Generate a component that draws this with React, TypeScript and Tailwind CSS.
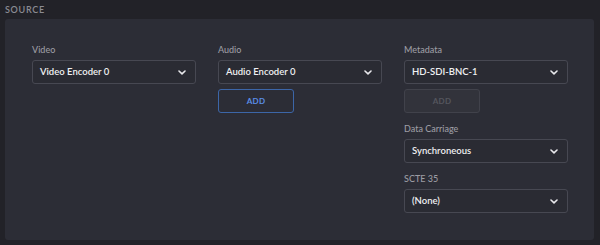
import React from "react";

const Chevron = () => (
  <svg width="8" height="5" viewBox="0 0 8 5" fill="none" className="shrink-0">
    <path d="M1 1l3 2.8L7 1" stroke="#e8e8ec" strokeWidth="1.6" strokeLinecap="round" strokeLinejoin="round" />
  </svg>
);

const Select = ({ value }: { value: string }) => (
  <div className="flex h-[24px] w-[164px] items-center justify-between rounded-[3px] border border-[#474852] bg-[#2a2b33] pl-[7px] pr-[9px] text-[9.5px] font-semibold text-[#f0f0f2]">
    <span>{value}</span>
    <Chevron />
  </div>
);

const Label = ({ children }: { children: React.ReactNode }) => (
  <div className="mb-[4px] h-[13px] text-[9px] font-medium leading-[13px] text-[#9c9ca3]">{children}</div>
);

export default function App() {
  return (
    <div
      className="h-[245px] w-[600px] bg-[#222228] px-[5px] pt-[3px]"
      style={{ fontFamily: "Lato, 'Noto Sans', sans-serif" }}
    >
      <div className="h-[14px] text-[9px] font-semibold leading-[14px] tracking-[0.7px] text-[#8b8b93]">SOURCE</div>
      <div className="mt-[2px] h-[221px] w-[589px] rounded-[3px] bg-[#2c2d36] pl-[27px] pt-[24px]">
        <div className="flex gap-[22px]">
          <div className="flex flex-col">
            <Label>Video</Label>
            <Select value="Video Encoder 0" />
          </div>
          <div className="flex flex-col">
            <Label>Audio</Label>
            <Select value="Audio Encoder 0" />
            <div className="mt-[5px] flex h-[24px] w-[76px] items-center justify-center rounded-[3px] border border-[#3c66a8] text-[8px] font-bold tracking-[0.3px] text-[#5a8ee6]">
              ADD
            </div>
          </div>
          <div className="flex flex-col">
            <Label>Metadata</Label>
            <Select value="HD-SDI-BNC-1" />
            <div className="mt-[5px] flex h-[24px] w-[76px] items-center justify-center rounded-[3px] border border-[#41424b] bg-[#32333b] text-[8px] font-bold tracking-[0.3px] text-[#55565e]">
              ADD
            </div>
            <div className="mt-[9px]">
              <Label>Data Carriage</Label>
            </div>
            <Select value="Synchroneous" />
            <div className="mt-[9px]">
              <Label>SCTE 35</Label>
            </div>
            <Select value="(None)" />
          </div>
        </div>
      </div>
    </div>
  );
}
